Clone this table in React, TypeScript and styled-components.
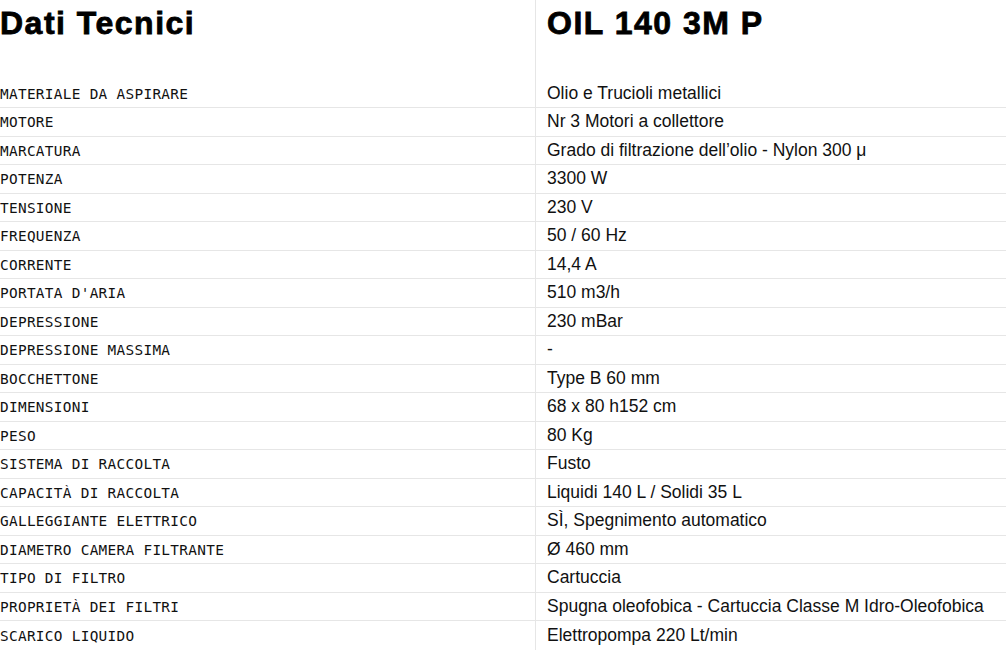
import styled, { createGlobalStyle } from 'styled-components'

/**
 * Data
 */
const specs: [string, string][] = [
  ['MATERIALE DA ASPIRARE', 'Olio e Trucioli metallici'],
  ['MOTORE', 'Nr 3 Motori a collettore'],
  ['MARCATURA', 'Grado di filtrazione dell’olio - Nylon 300 μ'],
  ['POTENZA', '3300 W'],
  ['TENSIONE', '230 V'],
  ['FREQUENZA', '50 / 60 Hz'],
  ['CORRENTE', '14,4 A'],
  ["PORTATA D'ARIA", '510 m3/h'],
  ['DEPRESSIONE', '230 mBar'],
  ['DEPRESSIONE MASSIMA', '-'],
  ['BOCCHETTONE', 'Type B 60 mm'],
  ['DIMENSIONI', '68 x 80 h152 cm'],
  ['PESO', '80 Kg'],
  ['SISTEMA DI RACCOLTA', 'Fusto'],
  ['CAPACITÀ DI RACCOLTA', 'Liquidi 140 L / Solidi 35 L'],
  ['GALLEGGIANTE ELETTRICO', 'SÌ, Spegnimento automatico'],
  ['DIAMETRO CAMERA FILTRANTE', 'Ø 460 mm'],
  ['TIPO DI FILTRO', 'Cartuccia'],
  ['PROPRIETÀ DEI FILTRI', 'Spugna oleofobica - Cartuccia Classe M Idro-Oleofobica'],
  ['SCARICO LIQUIDO', 'Elettropompa 220 Lt/min']
]

/**
 * Style
 */
const GlobalStyle = createGlobalStyle`
  html, body {
    margin: 0;
    padding: 0;
    background: #fff;
    color: #000;
    font-family: "Liberation Sans", Arial, sans-serif;
  }
`

const Sheet = styled.section`
  width: 1006px;
  display: flex;
  flex-direction: column;
`

const Row = styled.div<{ $head?: boolean; $last?: boolean }>`
  display: grid;
  grid-template-columns: 535px 1fr;
  height: ${(p) => (p.$head ? '79.5px' : '28.5px')};
  box-sizing: border-box;
  border-bottom: ${(p) => (p.$head || p.$last ? 'none' : '1px solid #e6e6e6')};
`

const Title = styled.h1`
  margin: 0;
  padding-top: 5px;
  font-family: "Liberation Sans", Arial, sans-serif;
  font-size: 32px;
  font-weight: 700;
  letter-spacing: 1.5px;
  line-height: 37px;
  -webkit-text-stroke: 0.8px #000;
`

const Label = styled.div`
  display: flex;
  align-items: center;
  font-family: "DejaVu Sans Mono", "Liberation Mono", monospace;
  font-size: 14.4px;
  letter-spacing: 0.3px;
  color: #111;
  padding-top: 1px;
`

const Value = styled.div`
  display: flex;
  align-items: center;
  border-left: 1px solid #e6e6e6;
  padding-left: 11px;
  font-size: 17.5px;
  color: #111;
  white-space: nowrap;
`

const HeadCell = styled.div`
  border-left: 1px solid #e6e6e6;
  padding-left: 11px;
`

/**
 * Component
 */
const App = (): JSX.Element => {
  return (
    <>
      <GlobalStyle />
      <Sheet>
        <Row $head>
          <Title>Dati Tecnici</Title>
          <HeadCell>
            <Title>OIL 140 3M P</Title>
          </HeadCell>
        </Row>
        {specs.map(([label, value], i) => (
          <Row key={label} $last={i === specs.length - 1}>
            <Label>{label}</Label>
            <Value>{value}</Value>
          </Row>
        ))}
      </Sheet>
    </>
  )
}

export default App
